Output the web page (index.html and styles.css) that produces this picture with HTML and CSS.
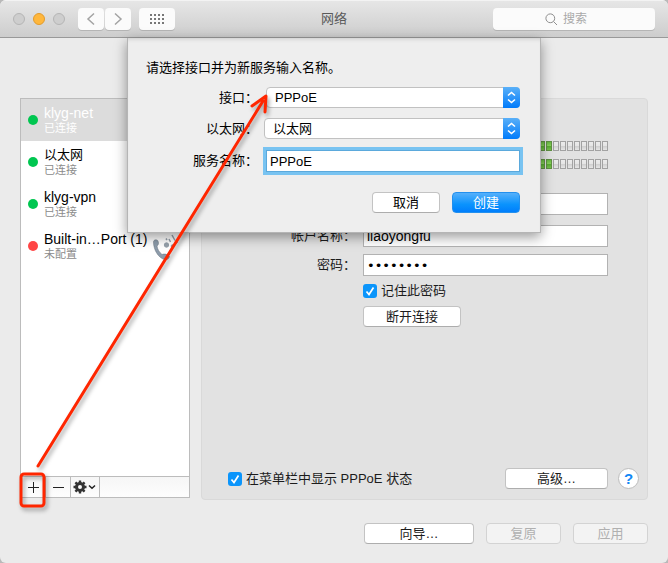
FILE: index.html
```html
<!DOCTYPE html>
<html lang="zh-CN">
<head>
<meta charset="utf-8">
<meta name="viewport" content="width=device-width, initial-scale=1">
<title>网络</title>
<link rel="stylesheet" href="styles.css">
</head>
<body>
<div class="window">
  <header class="titlebar">
    <div class="tools">
      <div class="lights">
        <button class="light" aria-label="关闭"></button>
        <button class="light light-min" aria-label="最小化"></button>
        <button class="light" aria-label="缩放"></button>
      </div>
      <div class="nav">
        <button class="tool" aria-label="后退"><svg width="10" height="14" viewBox="0 0 10 14"><path d="M8 1.500 2 7l6 5.500"/></svg></button>
        <button class="tool" aria-label="前进"><svg width="10" height="14" viewBox="0 0 10 14"><path d="M2 1.500 8 7l-6 5.500"/></svg></button>
      </div>
      <button class="tool tool-grid" aria-label="显示全部"><svg width="14" height="10" viewBox="0 0 14 10"><path d="M0 1h14M0 5h14M0 9h14"/></svg></button>
    </div>
    <h1 class="title">网络</h1>
    <label class="search">
      <svg width="13" height="13" viewBox="0 0 13 13"><circle cx="5.3" cy="5.3" r="4.4"/><path d="M8.5 8.5 12 12"/></svg>
      <input type="search" placeholder="搜索" aria-label="搜索">
    </label>
  </header>

  <main class="content">
    <div class="panes">
      <aside class="sidebar">
        <ul class="services">
          <li class="service selected"><span class="dot"></span><div><div class="name">klyg-net</div><div class="state">已连接</div></div></li>
          <li class="service"><span class="dot"></span><div><div class="name name-cjk">以太网</div><div class="state">已连接</div></div></li>
          <li class="service"><span class="dot"></span><div><div class="name">klyg-vpn</div><div class="state">已连接</div></div></li>
          <li class="service"><span class="dot dot-off"></span><div><div class="name">Built-in…Port (1)</div><div class="state">未配置</div></div>
            <svg class="phone" width="28" height="30" viewBox="0 0 28 30">
              <path class="handset" d="M1.500 9c0-2 2.500-3 4.200-1.500 1.300 2 1 4.500-.7 5.500.3 3 2.500 6.500 5 8.500 2-1 5.500-.5 7.500 2-.5 2.500-2.500 3.500-5 3C6.500 25 1.500 17 1.500 9z"/>
              <g class="waves"><circle cx="14.500" cy="12" r="2.200"/><circle cx="20.500" cy="13" r="1.300"/><path d="m14 5.500 1 1.500M17 6l1.500 3M20 2l3 5.500M23.500 10l2-1M18 18l2-1"/></g>
            </svg>
          </li>
        </ul>
        <div class="toolbar">
          <button class="mini" aria-label="添加服务"><svg width="12" height="12" viewBox="0 0 12 12"><path d="M6.500 1v11M1 6.500h11"/></svg></button>
          <button class="mini" aria-label="移除服务"><svg width="12" height="12" viewBox="0 0 12 12"><path d="M1 6.500h11"/></svg></button>
          <button class="mini mini-gear" aria-label="操作"><svg width="24" height="14" viewBox="0 0 24 14">
            <circle class="gear-ring" cx="7" cy="7" r="3.500"/>
            <path class="gear-teeth" d="M7 .5v2.500M7 11v2.500M.5 7H3M11 7h2.500M2.400 2.400l1.800 1.800M9.800 9.800l1.800 1.800M2.400 11.600l1.800-1.800M9.800 4.200l1.800-1.800"/>
            <path class="chev" d="m16 5.500 3 2.800 3-2.800"/></svg></button>
        </div>
      </aside>

      <section class="panel">
        <div class="details">
          <svg class="signal" height="11" role="img" aria-label="发送">
            <defs>
              <linearGradient id="g-on" x2="0" y2="1"><stop offset="0" stop-color="#62b63c"/><stop offset=".5" stop-color="#8bd35f"/><stop offset=".55" stop-color="#5aad34"/><stop offset="1" stop-color="#7cc64f"/></linearGradient>
              <linearGradient id="g-off" x2="0" y2="1"><stop offset="0" stop-color="#ececec"/><stop offset=".5" stop-color="#e5e5e5"/><stop offset=".55" stop-color="#d1d1d1"/><stop offset="1" stop-color="#e8e8e8"/></linearGradient>
              <pattern id="on" width="7" height="11" patternUnits="userSpaceOnUse"><rect x="1.500" y=".5" width="5" height="9" fill="url(#g-on)" stroke="#609144"/></pattern>
              <pattern id="off" width="7" height="11" patternUnits="userSpaceOnUse"><rect x="1.500" y=".5" width="5" height="9" fill="url(#g-off)" stroke="#a2a2a2"/></pattern>
            </defs>
            <rect width="100%" height="11" fill="url(#off)"/><rect width="189" height="11" fill="url(#on)"/>
          </svg>
          <svg class="signal" height="11" role="img" aria-label="接收"><rect width="100%" height="11" fill="url(#off)"/><rect width="189" height="11" fill="url(#on)"/></svg>
          <input class="field field-first" type="text" aria-label="PPPoE">
          <label class="caption" for="account">帐户名称：</label>
          <input class="field field-account" id="account" type="text" value="liaoyongfu">
          <label class="caption" for="password">密码：</label>
          <input class="field field-password" id="password" type="password" value="12345678">
          <label class="check"><span class="box"><input type="checkbox" checked><svg width="14" height="14" viewBox="0 0 14 14"><path d="m3.500 7.500 2.500 3 4.500-7"/></svg></span>记住此密码</label>
          <button class="push disconnect">断开连接</button>
        </div>
        <div class="panel-foot">
          <label class="check"><span class="box"><input type="checkbox" checked><svg width="14" height="14" viewBox="0 0 14 14"><path d="m3.500 7.500 2.500 3 4.500-7"/></svg></span>在菜单栏中显示 PPPoE 状态</label>
          <button class="push advanced">高级…</button>
          <button class="help" aria-label="帮助">?</button>
        </div>
      </section>
    </div>
    <footer class="actions">
      <button class="push assist">向导…</button>
      <button class="push action" disabled>复原</button>
      <button class="push action" disabled>应用</button>
    </footer>
  </main>

  <form class="sheet">
    <p class="prompt">请选择接口并为新服务输入名称。</p>
    <div class="rows">
      <label class="caption" for="iface">接口：</label>
      <div class="popup popup-inset"><select id="iface"><option>PPPoE</option></select><span class="arrows"><svg width="9" height="13" viewBox="0 0 9 13"><path d="m1 4.500 3.500-3 3.500 3M1 8.500l3.500 3 3.500-3"/></svg></span></div>
      <label class="caption" for="ether">以太网：</label>
      <div class="popup"><select id="ether"><option>以太网</option></select><span class="arrows"><svg width="9" height="13" viewBox="0 0 9 13"><path d="m1 4.500 3.500-3 3.500 3M1 8.500l3.500 3 3.500-3"/></svg></span></div>
      <label class="caption" for="service">服务名称：</label>
      <input class="focused" id="service" type="text" value="PPPoE">
    </div>
    <div class="sheet-actions">
      <button class="push sheet-btn" type="button">取消</button>
      <button class="push sheet-btn primary" type="button">创建</button>
    </div>
  </form>

  <svg class="marks" width="260" height="430" viewBox="0 0 260 430" aria-hidden="true">
    <path d="M20 383 245 18M234 23 248 13 247 29"/>
    <rect x="3" y="391" width="23" height="32" rx="3"/>
  </svg>
</div>
</body>
</html>
```
FILE: styles.css
```css
* { box-sizing: border-box; }
body {
  margin: 0;
  background: #b9b9b9;
  color: #1c1c1c;
  font: 13px/16px "Liberation Sans", "Noto Sans CJK SC", sans-serif;
}
button, input, select { font: inherit; color: inherit; margin: 0; }
svg { display: block; fill: none; }

.window {
  position: relative;
  display: flex;
  flex-direction: column;
  min-height: 100vh;
  background: #ebebeb;
  border-radius: 6px;
  overflow: hidden;
}

/* Title bar */
.titlebar {
  display: grid;
  grid-template-columns: 1fr auto 1fr;
  align-items: center;
  height: 38px;
  padding: 0 13px;
  background: linear-gradient(#e6e6e6, #cdcdcd);
  border-top: 1px solid #f3f3f3;
  border-bottom: 1px solid #999;
}
.tools, .lights, .nav { display: flex; align-items: center; }
.tools { gap: 8px; }
.lights { gap: 8px; margin-right: 5px; }
.nav { gap: 1px; }
.light {
  width: 12px;
  height: 12px;
  padding: 0;
  border: 1px solid #b5b5b5;
  border-radius: 50%;
  background: #cecece;
}
.light-min { background: #ffb73c; border-color: #e29b2c; }
.tool {
  display: grid;
  place-items: center;
  width: 26px;
  height: 22px;
  padding: 0;
  border: 0;
  border-radius: 4px;
  background: #fbfbfb;
  box-shadow: 0 1px 0 #b5b5b5;
}
.tool path { stroke: #a3a3a3; stroke-width: 1.5; }
.tool-grid { width: 36px; }
.tool-grid path { stroke: #777; stroke-width: 2; stroke-dasharray: 2; }
.title { margin: 0; font-size: 13px; font-weight: 400; color: #5a5a5a; }
.search {
  justify-self: end;
  display: flex;
  align-items: center;
  gap: 4px;
  width: 162px;
  height: 22px;
  padding-left: 52px;
  border-radius: 4px;
  background: #fbfbfb;
  box-shadow: 0 1px 0 #b5b5b5;
}
.search svg { flex: none; stroke: #8e8e8e; }
.search input { width: 80px; padding: 0 0 0 1px; border: 0; background: none; outline: 0; font-size: 12px; }
.search input::placeholder { color: #a9a9a9; }

/* Main area */
.content { flex: 1; display: flex; flex-direction: column; gap: 23px; padding: 60px 20px 19px; }
.panes { flex: 1; display: flex; gap: 11px; }

.sidebar {
  display: flex;
  flex-direction: column;
  width: 170px;
  margin-bottom: 2px;
  border: 1px solid #bcbcbc;
  background: #fff;
}
.services { flex: 1; margin: 0; padding: 0; list-style: none; }
.service { position: relative; display: flex; align-items: center; gap: 6px; height: 42px; padding-left: 7px; color: #000; }
.selected { background: #dcdcdc; color: #fff; }
.dot { width: 10px; height: 10px; border-radius: 50%; background: #00c650; }
.dot-off { background: #ff4545; }
.name { font-size: 14px; line-height: 16px; }
.name-cjk { font-size: 13px; }
.state { font-size: 11px; line-height: 14px; color: #8b8b8b; }
.selected .state { color: #fff; }
.phone { position: absolute; right: 9px; top: 8px; }
.handset { fill: #8d9cab; stroke: #66737f; stroke-width: .5; }
.waves { fill: #95a0aa; stroke: #95a0aa; }
.waves path { stroke-width: 1.5; }

.toolbar { display: flex; height: 21px; border-top: 1px solid #bcbcbc; background: linear-gradient(#f6f6f6, #fdfdfd); }
.mini {
  display: grid;
  place-items: center;
  width: 25px;
  padding: 0;
  border: 0;
  border-right: 1px solid #bcbcbc;
  background: none;
}
.mini path { stroke: #222; }
.mini-gear { width: 29px; }
.mini .gear-ring { stroke: #333; stroke-width: 3; }
.mini .gear-teeth { stroke: #333; stroke-width: 2.4; }
.mini .chev { stroke-width: 1.5; }

.panel {
  flex: 1;
  display: flex;
  flex-direction: column;
  justify-content: space-between;
  padding: 42px 8px 10px 26px;
  border: 1px solid #d9d9d9;
  border-radius: 4px;
  background: #e2e2e2;
}
.details {
  display: grid;
  grid-template-columns: 128px 1fr;
  column-gap: 7px;
  row-gap: 7px;
  align-items: center;
  margin-right: 31px;
}
.details > * { grid-column: 2; }
.details > .caption { grid-column: 1; }
.caption { text-align: right; white-space: nowrap; }
.signal { width: 100%; }
.field {
  width: 100%;
  height: 22px;
  padding: 0 3px;
  border: 1px solid #b2b2b2;
  background: #fff;
  outline: 0;
  color: #000;
}
.field-first { margin: 16px 0 3px; }
.field-account { font-size: 14px; }
.field-password { font-family: "DejaVu Sans", sans-serif; }

.check { display: flex; align-items: center; gap: 4px; }
.box { display: grid; }
.box > * { grid-area: 1 / 1; }
.box input { appearance: none; width: 14px; height: 14px; border-radius: 3px; background: #0b95fb; }
.box svg { pointer-events: none; stroke: #fff; stroke-width: 1.7; }

.push {
  height: 21px;
  padding: 0;
  border: 1px solid #c3c3c3;
  border-bottom-color: #adadad;
  border-radius: 4px;
  background: #fff;
  line-height: 18px;
}
.push:disabled { background: #f3f3f3; border-color: #d3d3d3; color: #b0b0b0; }
.disconnect { width: 98px; }
.panel-foot { display: flex; align-items: center; }
.advanced { width: 103px; margin-left: auto; }
.help {
  width: 21px;
  height: 21px;
  margin-left: 10px;
  padding: 0;
  border: 1px solid #bdbdbd;
  border-radius: 50%;
  background: #fff;
  color: #1388f6;
  font-size: 15px;
  font-weight: 700;
  line-height: 18px;
}
.actions { display: flex; justify-content: flex-end; gap: 12px; }
.assist { width: 110px; }
.action { width: 75px; }

/* Sheet that drops from the title bar */
.sheet {
  position: absolute;
  top: 38px;
  left: 50%;
  width: 414px;
  padding: 22px 20px 19px 18px;
  transform: translateX(-50%);
  background: #eee;
  border: 1px solid #b5b5b5;
  border-top: 0;
  box-shadow: 0 4px 12px rgba(0, 0, 0, .4), inset 0 4px 4px -3px rgba(0, 0, 0, .15);
  color: #000;
}
.prompt { margin: 0 0 11px; }
.rows { display: grid; grid-template-columns: 112px 1fr; column-gap: 6px; row-gap: 10px; align-items: center; }
.popup { display: grid; }
.popup-inset { margin-left: 2px; }
.popup > * { grid-row: 1; grid-column: 1; }
.popup select {
  appearance: none;
  width: 100%;
  height: 21px;
  padding: 0 24px 0 8px;
  border: 1px solid #c1c1c1;
  border-radius: 4px;
  background: #fff;
  outline: 0;
}
.arrows {
  justify-self: end;
  display: grid;
  place-items: center;
  width: 17px;
  border-radius: 0 4px 4px 0;
  background: linear-gradient(#5ab0f8, #007bfb);
  pointer-events: none;
}
.arrows path { stroke: #fff; stroke-width: 1.6; }
.focused {
  height: 22px;
  margin: 1px 0 0 2px;
  padding: 0 3px;
  border: 1px solid #5ba9dc;
  background: #fff;
  outline: 0;
  box-shadow: 0 0 0 3px #78c3f1;
}
.sheet-actions { display: flex; justify-content: flex-end; gap: 12px; margin-top: 20px; }
.sheet-btn { width: 68px; }
.primary { border-color: #2390ee; background: linear-gradient(#56b0fb, #0a93fd 60%, #007efc); color: #fff; }

/* Callout arrow and highlight */
.marks { position: absolute; left: 18px; top: 83px; pointer-events: none; filter: drop-shadow(2px 3px 2px rgba(0, 0, 0, .35)); }
.marks path, .marks rect { stroke: #ff2600; stroke-width: 3; stroke-linecap: round; stroke-linejoin: round; }
```
